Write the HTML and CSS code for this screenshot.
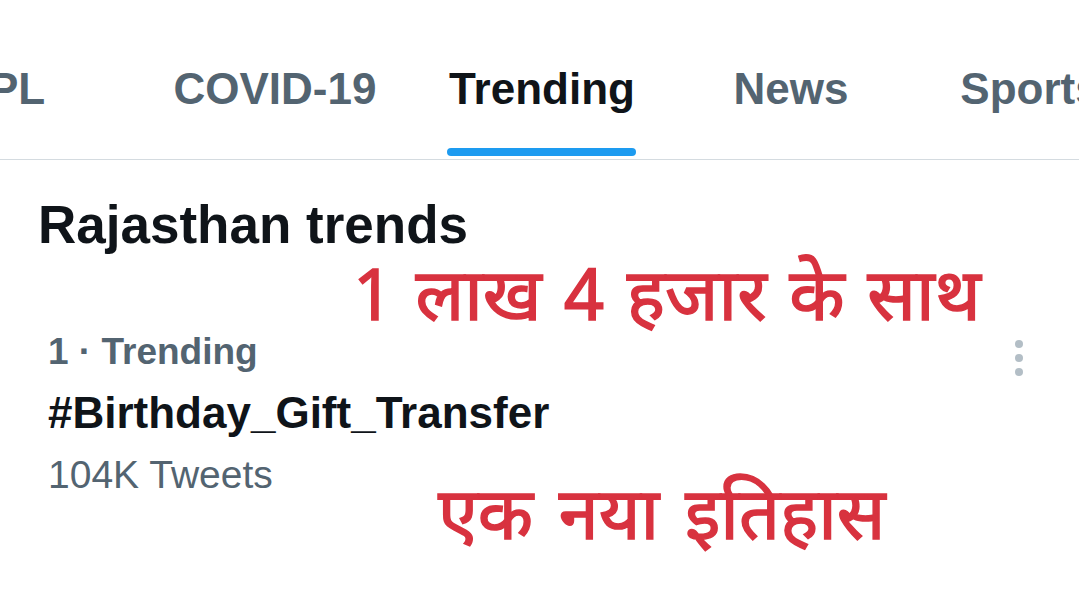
FILE: index.html
```html
<!DOCTYPE html>
<html lang="en">
<head>
    <meta charset="UTF-8">
    <meta name="viewport" content="width=device-width, initial-scale=1.0">
    <title>Explore</title>
    <link rel="stylesheet" href="styles.css">
</head>
<body>

<nav class="tabs">
    <div class="tab"><span class="tab-label">IPL</span></div>
    <div class="tab"><span class="tab-label">COVID-19</span></div>
    <div class="tab active"><span class="tab-label">Trending</span></div>
    <div class="tab"><span class="tab-label">News</span></div>
    <div class="tab"><span class="tab-label">Sports</span></div>
</nav>

<main class="feed">
    <h2 class="section-title">Rajasthan trends</h2>

    <div class="trend">
        <div class="trend-body">
            <div class="trend-meta">1 · Trending</div>
            <div class="trend-name">#Birthday_Gift_Transfer</div>
            <div class="trend-count">104K Tweets</div>
        </div>
        <div class="more">
            <span></span><span></span><span></span>
        </div>
    </div>

    <!-- red caption stamped over the screenshot -->
    <div class="caption caption-top">1 लाख 4 हजार के साथ</div>
    <div class="caption caption-bottom">एक नया इतिहास</div>
</main>

</body>
</html>
```

FILE: styles.css
```css
html, body {
    height: 100%;
}

body {
    margin: 0;
    background: #fff;
    font-family: "Liberation Sans", Arial, sans-serif;
    color: #0f1419;
    overflow: hidden;
}

/* Tabs */
.tabs {
    display: grid;
    grid-template-columns: 254px 274px 260px 238px 240px;
    height: 159px;
    border-bottom: 1px solid #d4dbe0;
    margin-left: -116px;
    white-space: nowrap;
}

.tab {
    display: flex;
    justify-content: center;
    font-size: 44px;
    font-weight: bold;
    color: #536471;
    line-height: 178px;
    height: 159px;
}

.tab-label {
    position: relative;
}

.tab.active {
    color: #0f1419;
}

.tab.active .tab-label::after {
    content: "";
    position: absolute;
    left: -2px;
    right: -1px;
    bottom: 3px;
    height: 8px;
    border-radius: 4px;
    background: #1d9bf0;
}

/* Feed */
.feed {
    position: relative;
}

.section-title {
    margin: 34px 0 0 38px;
    font-size: 53px;
    line-height: 62px;
    font-weight: bold;
}

.trend {
    display: flex;
    justify-content: space-between;
    margin-top: 74px;
    padding: 0 56px 0 48px;
}

.trend-meta {
    font-size: 37px;
    line-height: 44px;
    font-weight: bold;
    color: #536471;
}

.trend-name {
    margin-top: 13px;
    font-size: 44px;
    line-height: 52px;
    font-weight: bold;
}

.trend-count {
    margin-top: 13px;
    font-size: 39px;
    line-height: 46px;
    color: #536471;
}

.more {
    display: flex;
    flex-direction: column;
    gap: 6px;
    padding-top: 10px;
}

.more span {
    width: 8px;
    height: 8px;
    border-radius: 50%;
    background: #b3bec6;
}

/* Red overlay caption */
.caption {
    position: absolute;
    font-family: "Noto Sans Devanagari", "Lohit Devanagari", "Noto Sans", sans-serif;
    font-weight: normal;
    font-size: 72px;
    line-height: 1;
    color: #d8323f;
    white-space: nowrap;
    -webkit-text-stroke: 1.5px #d8323f;
}

.caption-top {
    left: 353px;
    top: 72px;
    word-spacing: 4px;
}

.caption-bottom {
    left: 438px;
    top: 291px;
    word-spacing: 7px;
}
```
